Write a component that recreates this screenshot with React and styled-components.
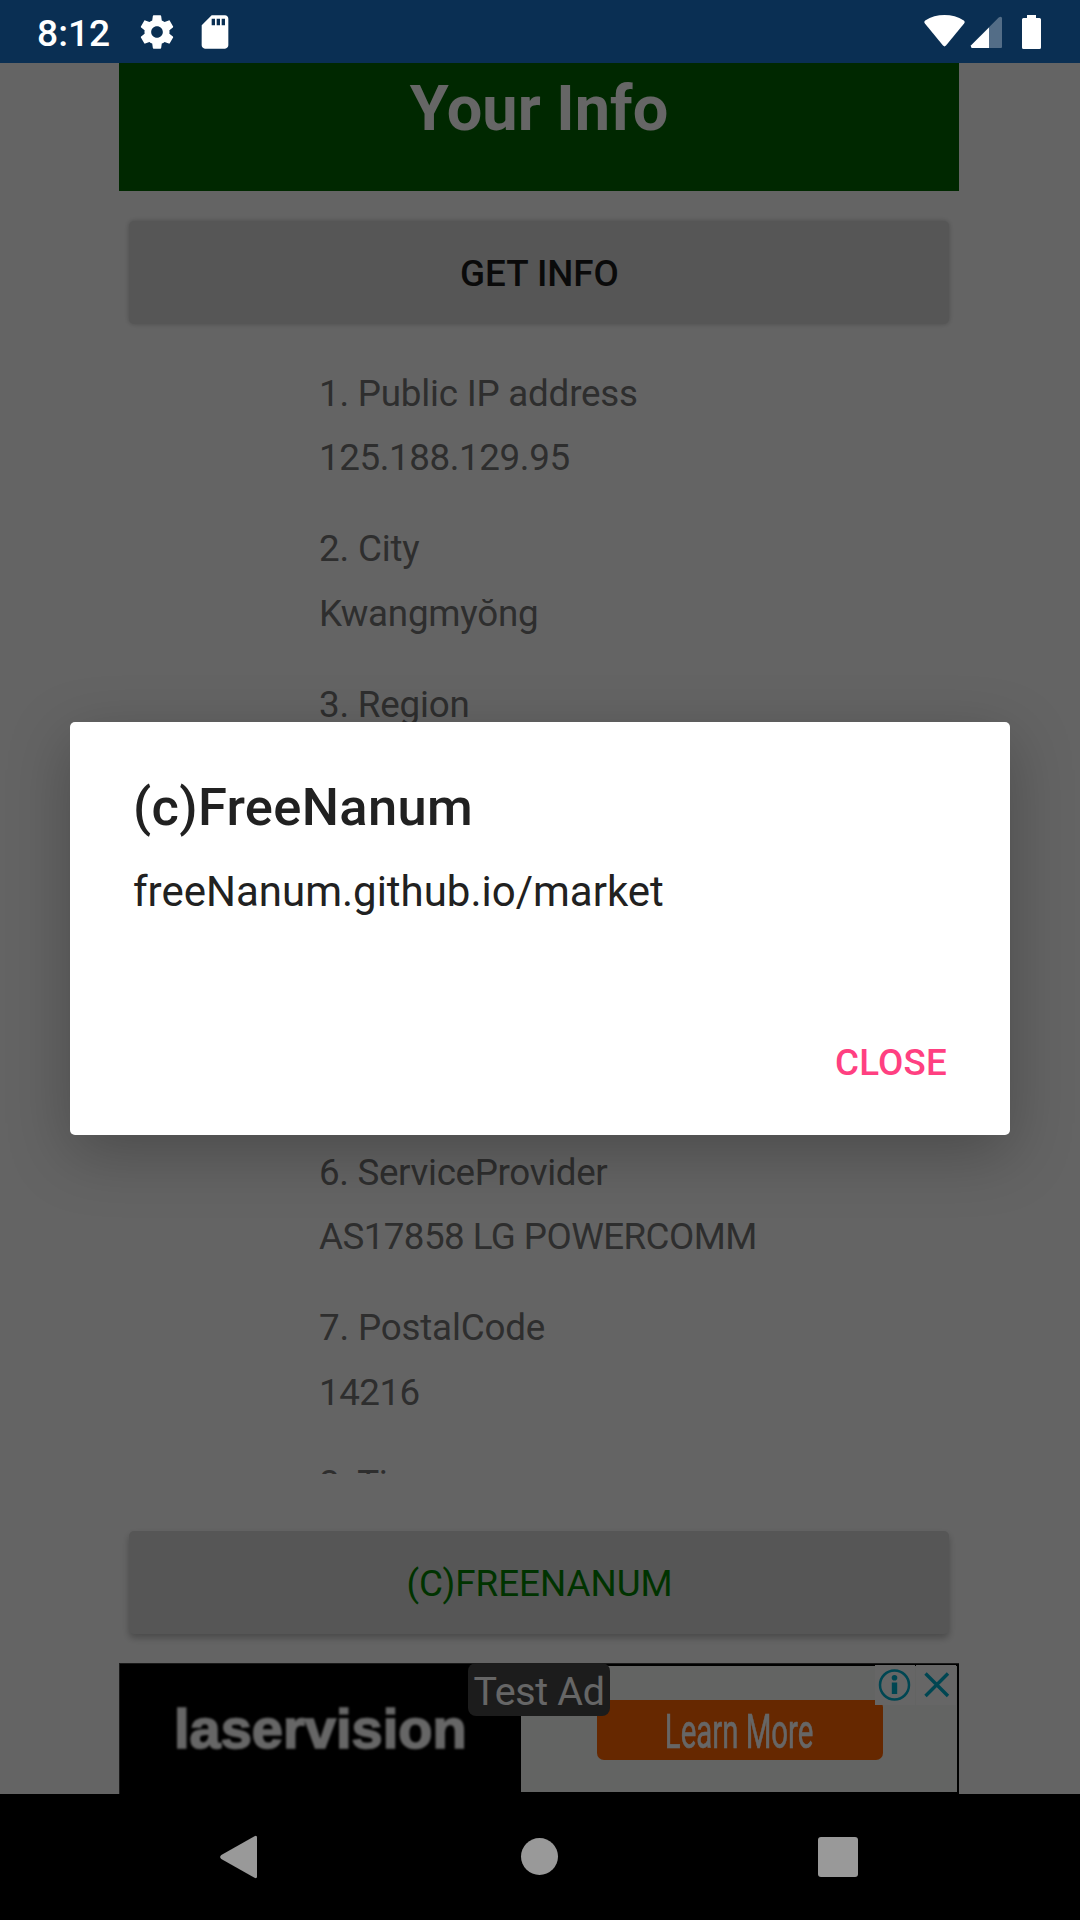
import React from "react";
import styled, { createGlobalStyle } from "styled-components";

const GlobalStyle = createGlobalStyle`
  body {
    margin: 0;
    background: #000;
  }
  * {
    box-sizing: border-box;
  }
`;

const Screen = styled.div`
  width: 1080px;
  height: 1920px;
  display: flex;
  flex-direction: column;
  overflow: hidden;
  font-family: Roboto, "Noto Sans", sans-serif;
  font-size: 36.75px;
`;

const StatusBar = styled.header`
  height: 63px;
  flex: none;
  display: flex;
  align-items: center;
  justify-content: space-between;
  padding: 0 37px 0 37px;
  background: #0a2f53;
  color: #fff;
`;

const StatusGroup = styled.div`
  display: flex;
  align-items: center;
`;

const Clock = styled.span`
  font-size: 37.2px;
  font-weight: 500;
  line-height: 63px;
  padding-top: 3px;
  margin-right: 26.5px;
`;

const StatusIcon = styled.svg`
  display: block;
  flex: none;
  width: ${(p) => p.$w}px;
  height: ${(p) => p.$h}px;
  margin-left: ${(p) => p.$gap || 0}px;
`;

const Content = styled.main`
  flex: 1;
  min-height: 0;
  position: relative;
  display: flex;
  justify-content: center;
  overflow: hidden;
  background: #fafafa;
`;

const Column = styled.div`
  width: 840px;
  margin-right: 2px;
  display: flex;
  flex-direction: column;
`;

const Title = styled.h1`
  margin: 0 0 30px;
  height: 128px;
  padding-top: 8px;
  flex: none;
  background: #006400;
  color: #fff;
  font-size: 63px;
  font-weight: 700;
  line-height: 75px;
  text-align: center;
`;

const ActionButton = styled.button`
  flex: none;
  height: 103px;
  margin: 0 10px;
  padding: 2px 0 0 1px;
  border: 0;
  border-radius: 5px;
  background: #d6d7d7;
  box-shadow: ${(p) => (p.$raised ? "0 4px 7px rgba(0, 0, 0, 0.26)" : "0 0 5px rgba(0, 0, 0, 0.24)")};
  color: ${(p) => (p.$accent ? "#008000" : "#1b1b1b")};
  font-family: inherit;
  font-size: 36.75px;
  font-weight: ${(p) => (p.$accent ? 400 : 500)};
  text-transform: uppercase;
`;

const InfoList = styled.dl`
  margin: 44.7px 0 57px;
  padding: 0 0 0 200px;
  height: 1105.3px;
  flex: none;
  overflow: hidden;
`;

const InfoItem = styled.div`
  height: 155.78px;
  color: #737373;
  line-height: 50px;
`;

const InfoLabel = styled.dt`
  height: 64.5px;
  letter-spacing: ${(p) => p.$tracking}px;
`;

const InfoValue = styled.dd`
  margin: 0;
  letter-spacing: ${(p) => p.$tracking}px;
`;

const Ad = styled.aside`
  position: relative;
  flex: none;
  height: 131px;
  margin-top: 29px;
  display: flex;
  background: #000;
  border: solid #404040;
  border-width: 1px 0 0 1px;
`;

const AdBrand = styled.div`
  width: 401px;
  padding: 28px 0 0 54px;
  color: #fff;
  font-family: "Liberation Sans", Arial, sans-serif;
  font-size: 56px;
  font-weight: 700;
  line-height: 74px;
  -webkit-text-stroke: 1.6px #fff;
  filter: blur(1px);
`;

const AdPanel = styled.div`
  width: 436px;
  height: 126px;
  margin-top: 2px;
  padding: 34px 0 0 76px;
  background: #f7f9f7;
`;

const AdAction = styled.div`
  width: 286px;
  height: 60px;
  border-radius: 7px;
  background: #ff6400;
  color: #fff;
  display: flex;
  align-items: center;
  justify-content: center;
  filter: blur(0.5px);
`;

const Condensed = styled.span`
  padding: 4px 4px 0 0;
  font-size: 48px;
  line-height: 60px;
  white-space: nowrap;
  -webkit-text-stroke: 0.6px #fff;
  transform: scaleX(0.612);
`;

const TestBadge = styled.div`
  position: absolute;
  left: 348px;
  top: -1px;
  width: 142px;
  height: 53px;
  border-radius: 8px;
  background: #464646;
  color: #fff;
  font-size: 39.375px;
  letter-spacing: -0.3px;
  line-height: 57px;
  text-align: center;
  white-space: nowrap;
`;

const AdChoices = styled.div`
  position: absolute;
  top: 1px;
  right: 3px;
  display: flex;
  gap: 1px;
`;

const ChoiceIcon = styled.svg`
  display: block;
  width: 40px;
  height: 40px;
  background: #fff;
`;

const Scrim = styled.div`
  position: absolute;
  inset: 0;
  background: rgba(0, 0, 0, 0.6);
`;

const Dialog = styled.section`
  position: absolute;
  left: 70px;
  top: 659px;
  width: 940px;
  height: 413px;
  padding: 47px 63px 0;
  border-radius: 5px;
  background: #fff;
  box-shadow: 0 18px 62px rgba(0, 0, 0, 0.25);
  color: #212121;
  display: flex;
  flex-direction: column;
`;

const DialogTitle = styled.h2`
  margin: 0;
  font-size: 52.5px;
  font-weight: 500;
  letter-spacing: 0.32px;
  line-height: 76px;
`;

const DialogMessage = styled.p`
  margin: 17px 0 0;
  font-size: 42px;
  line-height: 60px;
`;

const DialogClose = styled.button`
  align-self: flex-end;
  margin-top: 116px;
  padding: 0;
  border: 0;
  background: none;
  color: #ff4081;
  font-family: inherit;
  font-size: 36.75px;
  font-weight: 500;
  letter-spacing: 0.2px;
  line-height: 50px;
`;

const NavBar = styled.nav`
  flex: none;
  height: 126px;
  display: flex;
  align-items: center;
  justify-content: center;
  gap: 220px;
  background: #000;
`;

const NavIcon = styled.svg`
  display: block;
  width: 80px;
  height: 80px;
  fill: #999;
`;

const INFO = [
  { n: 1, label: "Public IP address", labelTracking: -0.21, value: "125.188.129.95", valueTracking: -0.4 },
  { n: 2, label: "City", labelTracking: -0.18, value: "Kwangmyŏng", valueTracking: -0.23 },
  { n: 3, label: "Region", labelTracking: -0.2 },
  { n: 4 },
  { n: 5 },
  { n: 6, label: "ServiceProvider", labelTracking: -0.33, value: "AS17858 LG POWERCOMM", valueTracking: -0.56 },
  { n: 7, label: "PostalCode", labelTracking: -0.18, value: "14216", valueTracking: -0.5 },
  { n: 8, label: "Timezone", labelTracking: -0.2 },
];

export default function App() {
  return (
    <Screen>
      <GlobalStyle />
      <StatusBar>
        <StatusGroup>
          <Clock>8:12</Clock>
          <StatusIcon $w={40} $h={40} viewBox="0 0 24 24" fill="#fff">
            <path d="M19.43 12.98c.04-.32.07-.64.07-.98s-.03-.66-.07-.98l2.11-1.65c.19-.15.24-.42.12-.64l-2-3.46c-.12-.22-.39-.3-.61-.22l-2.49 1c-.52-.4-1.08-.73-1.69-.98l-.38-2.65C14.46 2.18 14.25 2 14 2h-4c-.25 0-.46.18-.49.42l-.38 2.65c-.61.25-1.17.59-1.69.98l-2.49-1c-.23-.09-.49 0-.61.22l-2 3.46c-.13.22-.07.49.12.64l2.11 1.65c-.04.32-.07.65-.07.98s.03.66.07.98l-2.11 1.65c-.19.15-.24.42-.12.64l2 3.46c.12.22.39.3.61.22l2.49-1c.52.4 1.08.73 1.69.98l.38 2.65c.03.24.24.42.49.42h4c.25 0 .46-.18.49-.42l.38-2.65c.61-.25 1.17-.59 1.69-.98l2.49 1c.23.09.49 0 .61-.22l2-3.46c.12-.22.07-.49-.12-.64l-2.11-1.65zM12 15.5c-1.93 0-3.5-1.57-3.5-3.5s1.57-3.5 3.5-3.5 3.5 1.57 3.5 3.5-1.57 3.5-3.5 3.5z" />
          </StatusIcon>
          <StatusIcon $w={40} $h={40} $gap={18} viewBox="0 0 24 24" fill="#fff">
            <path d="M18 2h-8L4.02 8 4 20c0 1.1.9 2 2 2h12c1.1 0 2-.9 2-2V4c0-1.1-.9-2-2-2zm-6 6h-2V4h2v4zm3 0h-2V4h2v4zm3 0h-2V4h2v4z" />
          </StatusIcon>
        </StatusGroup>
        <StatusGroup>
          <StatusIcon $w={42} $h={36} viewBox="0 0 42 36" fill="#fff">
            <path d="M.9 9.4Q-.4 7.8 1.2 6.6C7 2.8 13.5 1.1 20.5 1.1S34 2.8 39.8 6.6Q41.4 7.8 40.1 9.4L22 31.6Q20.5 33.2 19 31.6Z" />
          </StatusIcon>
          <StatusIcon $w={33} $h={36} $gap={4} viewBox="0 0 33 36" fill="#fff">
            <path d="M28.7 3.6Q31.9 1.6 32 4.6V33Q32 34 31 34H1.8Q.2 33.5 1.2 31.3Z" opacity=".3" />
            <path d="M19 13.5V34H2Q.2 33.5 1.2 31.3Z" />
          </StatusIcon>
          <StatusIcon $w={22} $h={36} $gap={18} viewBox="0 0 22 36" fill="#fff">
            <path d="M6 1h9v3h3.5Q20 4 20 5.5V33.5Q20 35 18.5 35H2.5Q1 35 1 33.5V5.5Q1 4 2.5 4H6Z" />
          </StatusIcon>
        </StatusGroup>
      </StatusBar>

      <Content>
        <Column>
          <Title>Your Info</Title>
          <ActionButton>Get Info</ActionButton>
          <InfoList>
            {INFO.map((item) => (
              <InfoItem key={item.n}>
                {item.label && (
                  <InfoLabel $tracking={item.labelTracking}>{`${item.n}. ${item.label}`}</InfoLabel>
                )}
                {item.value && <InfoValue $tracking={item.valueTracking}>{item.value}</InfoValue>}
              </InfoItem>
            ))}
          </InfoList>
          <ActionButton $accent $raised>
            (c)FreeNanum
          </ActionButton>
          <Ad>
            <AdBrand>laservision</AdBrand>
            <AdPanel>
              <AdAction>
                <Condensed>Learn More</Condensed>
              </AdAction>
            </AdPanel>
            <TestBadge>Test Ad</TestBadge>
            <AdChoices>
              <ChoiceIcon viewBox="0 0 40 40">
                <circle cx="19.5" cy="20" r="14.5" fill="none" stroke="#00aecd" strokeWidth="2.5" />
                <circle cx="19.5" cy="12.8" r="2.8" fill="#00aecd" />
                <rect x="16.8" y="17.5" width="5.4" height="11.5" fill="#00aecd" />
              </ChoiceIcon>
              <ChoiceIcon viewBox="0 0 40 40">
                <path d="M9.5 8.5L32 31M32 8.5L9.5 31" fill="none" stroke="#00aecd" strokeWidth="3.4" />
              </ChoiceIcon>
            </AdChoices>
          </Ad>
        </Column>
        <Scrim />
        <Dialog role="dialog">
          <DialogTitle>(c)FreeNanum</DialogTitle>
          <DialogMessage>freeNanum.github.io/market</DialogMessage>
          <DialogClose>CLOSE</DialogClose>
        </Dialog>
      </Content>

      <NavBar>
        <NavIcon viewBox="0 0 80 80">
          <path d="M54.5 19.3Q57 18 57 20.5V59.5Q57 62 54.5 60.7L21.3 42Q19 40 21.3 38Z" />
        </NavIcon>
        <NavIcon viewBox="0 0 80 80">
          <circle cx="39.5" cy="39.5" r="18.5" />
        </NavIcon>
        <NavIcon viewBox="0 0 80 80">
          <rect x="18" y="20" width="40" height="40" rx="3" />
        </NavIcon>
      </NavBar>
    </Screen>
  );
}
